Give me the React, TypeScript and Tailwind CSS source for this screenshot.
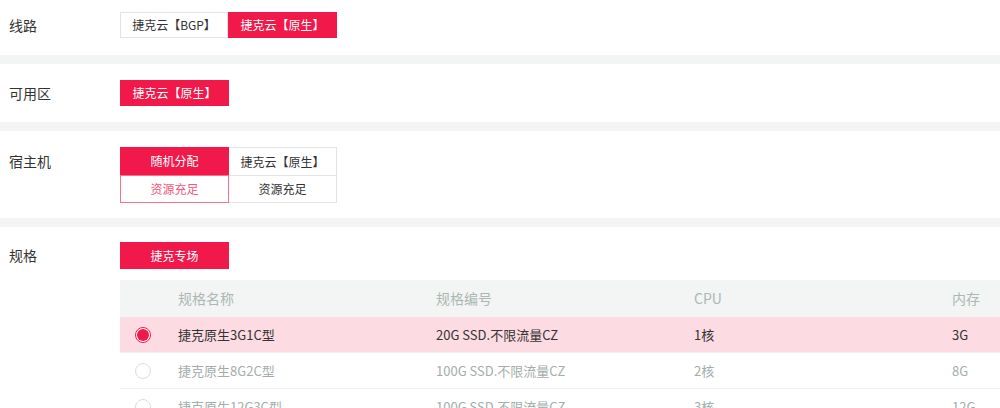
const font = { fontFamily: '"Noto Sans CJK SC", "Noto Sans", sans-serif' };

const specs = [
	{ name: "捷克原生3G1C型", code: "20G SSD.不限流量CZ", cpu: "1核", mem: "3G" },
	{ name: "捷克原生8G2C型", code: "100G SSD.不限流量CZ", cpu: "2核", mem: "8G" },
	{ name: "捷克原生12G3C型", code: "100G SSD.不限流量CZ", cpu: "3核", mem: "12G" },
];

const Band = () => <div className="h-[9px] w-full bg-[#f3f5f4]" />;

const Label = ({ children }: { children: React.ReactNode }) => (
	<div className="w-[120px] shrink-0 pl-[9px] text-[14px] leading-[26px] text-[#333]">{children}</div>
);

const Tab = ({ active, children }: { active?: boolean; children: React.ReactNode }) => (
	<div
		className={
			active
				? "flex h-[26px] w-[109px] items-center justify-center border border-[#f1184a] bg-[#f1184a] text-[12px] text-white"
				: "flex h-[26px] w-[108px] items-center justify-center border border-[#e3e3e3] bg-white text-[12px] text-[#333]"
		}
	>
		{children}
	</div>
);

const App = () => {
	return (
		<div className="h-[408px] w-[1000px] overflow-hidden bg-white" style={font}>
			<div className="flex pb-[17px] pt-[12px]">
				<Label>线路</Label>
				<div className="flex">
					<Tab>捷克云【BGP】</Tab>
					<Tab active>捷克云【原生】</Tab>
				</div>
			</div>
			<Band />
			<div className="flex py-[16px]">
				<Label>可用区</Label>
				<Tab active>捷克云【原生】</Tab>
			</div>
			<Band />
			<div className="flex pb-[15px] pt-[16px]">
				<div className="pt-[1px]">
					<Label>宿主机</Label>
				</div>
				<div className="flex text-[12px]">
					<div className="flex w-[109px] flex-col">
						<div className="flex h-[28px] items-center justify-center bg-[#f1184a] text-white">随机分配</div>
						<div className="flex h-[28px] items-center justify-center border border-[#f7708e] text-[#f4577a]">
							资源充足
						</div>
					</div>
					<div className="flex w-[108px] flex-col border-y border-r border-[#e3e3e3] text-[#333]">
						<div className="flex h-[27px] items-center justify-center">捷克云【原生】</div>
						<div className="flex h-[27px] items-center justify-center border-t border-[#e3e3e3]">资源充足</div>
					</div>
				</div>
			</div>
			<Band />
			<div className="flex pt-[15px]">
				<Label>规格</Label>
				<div className="flex flex-col">
					<div className="flex h-[27px] w-[109px] items-center justify-center bg-[#f1184a] text-[12px] text-white">
						捷克专场
					</div>
					<div className="mt-[11px] w-[1090px] text-[13px]">
						<div className="flex h-[37px] items-center bg-[#f3f5f4] text-[14px] text-[#abb7b3]">
							<div className="w-[58px] shrink-0" />
							<div className="w-[258px] shrink-0">规格名称</div>
							<div className="w-[258px] shrink-0">规格编号</div>
							<div className="w-[258px] shrink-0">CPU</div>
							<div className="w-[258px] shrink-0">内存</div>
						</div>
						{specs.map((s, i) => {
							const on = i === 0;
							return (
								<div
									key={s.name}
									className={
										on
											? "flex h-[35px] items-center bg-[#fcdbe2] text-[#333]"
											: "flex h-[36px] items-center border-t border-[#f0f2f1] text-[#a3adaa]"
									}
								>
									<div className="flex w-[58px] shrink-0 justify-center pr-[12px]">
										{on ? (
											<div className="flex h-[16px] w-[16px] items-center justify-center rounded-full border border-[#f1184a] bg-white">
												<div className="h-[12px] w-[12px] rounded-full bg-[#f1184a]" />
											</div>
										) : (
											<div className="h-[16px] w-[16px] rounded-full border border-[#dcdcdc] bg-white" />
										)}
									</div>
									<div className="w-[258px] shrink-0">{s.name}</div>
									<div className="w-[258px] shrink-0">{s.code}</div>
									<div className="w-[258px] shrink-0">{s.cpu}</div>
									<div className="w-[258px] shrink-0">{s.mem}</div>
								</div>
							);
						})}
					</div>
				</div>
			</div>
		</div>
	);
};

export default App;
